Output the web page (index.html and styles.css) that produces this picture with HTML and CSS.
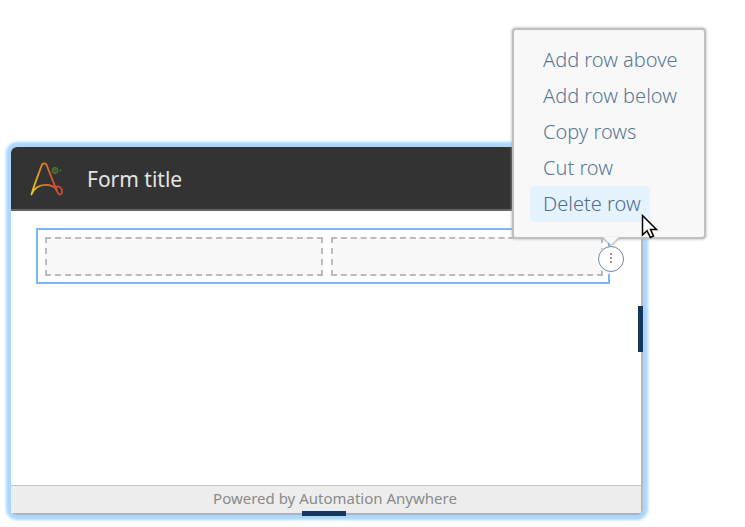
FILE: index.html
```html
<!DOCTYPE html>
<html lang="en">
<head>
    <meta charset="UTF-8">
    <title>Form builder</title>
    <link rel="stylesheet" href="styles.css">
</head>

<body>

    <main class="form-canvas">

        <header class="form-header">
            <svg class="logo" viewBox="0 0 36 36" aria-hidden="true">
                <defs>
                    <linearGradient id="stroke" x1="0" y1="0" x2="1" y2="0">
                        <stop offset="0" stop-color="#e8c81e"/>
                        <stop offset="0.35" stop-color="#d98427"/>
                        <stop offset="0.7" stop-color="#d9582b"/>
                        <stop offset="1" stop-color="#c9472a"/>
                    </linearGradient>
                </defs>
                <path d="M2.500 33.500C5 24 10 12 12.500 5C13.500 1.500 17 1.500 18 5L25.500 24C27 29 28.500 33.500 31 33.500C34.500 33 33.500 26.500 29.500 25.500C27 25 26.500 28 28 29C26 26 23 24.500 19 24C13 23.500 6 25 2.500 33.500Z" fill="none" stroke="url(#stroke)" stroke-width="1.800" stroke-linejoin="round"/>
                <circle cx="26" cy="9.500" r="3" fill="#3d5c2d" stroke="#4f7d34" stroke-width="1"/>
                <path d="M31.500 8v3" stroke="#426a30" stroke-width="1.200"/>
            </svg>
            <h1 class="form-title">Form title</h1>
        </header>

        <section class="form-body">
            <div class="form-row">
                <div class="cell"></div>
                <div class="cell"></div>

                <button class="more-button" type="button" aria-label="Row options">
                    <svg viewBox="0 0 24 24" aria-hidden="true">
                        <path d="M11 6h2v2h-2zM11 10h2v2h-2zM11 14h2v2h-2z" fill="#b58a80"/>
                    </svg>
                </button>

                <div class="row-menu">
                    <button class="menu-item" type="button">Add row above</button>
                    <button class="menu-item" type="button">Add row below</button>
                    <button class="menu-item" type="button">Copy rows</button>
                    <button class="menu-item" type="button">Cut row</button>
                    <button class="menu-item active" type="button">Delete row
                        <svg class="cursor" viewBox="0 0 18 26" aria-hidden="true">
                            <path d="M1.500 1.500V21L6 16.800L9.500 23.500L12.500 22L9.500 15.500H15.500Z" fill="#fff" stroke="#000" stroke-width="1.500"/>
                        </svg>
                    </button>
                </div>
            </div>
        </section>

        <footer class="form-footer">Powered by Automation Anywhere</footer>

        <span class="handle handle-right"></span>
        <span class="handle handle-bottom"></span>

    </main>

</body>
</html>
```

FILE: styles.css
```css
* {
    box-sizing: border-box;
}

body {
    margin: 0;
    padding: 147px 102px 12px 11px;
    background: #ffffff;
    font-family: "Noto Sans", "Open Sans", sans-serif;
}

.form-canvas {
    position: relative;
    display: flex;
    flex-direction: column;
    min-height: calc(100vh - 159px);
    background: #ffffff;
    border-right: 2px solid #b8b8b8;
    border-bottom: 2px solid #b0b3b8;
    border-radius: 6px;
    box-shadow: 0 0 3px 5px #a9d7ff;
}

.form-header {
    display: flex;
    align-items: center;
    gap: 22px;
    padding: 14px 18px 12px;
    background: #333333;
    border-bottom: 2px solid #666666;
    border-radius: 6px 0 0 0;
}

.logo {
    width: 36px;
    height: 36px;
}

.form-title {
    margin: 0;
    color: #e4e4e4;
    font-size: 21px;
    font-weight: 400;
    line-height: 36px;
}

.form-body {
    flex: 1;
    padding: 17px 31px 18px 25px;
}

.form-row {
    position: relative;
    display: grid;
    grid-template-columns: 278fr 272fr;
    gap: 8px;
    padding: 7px 5px 6px 7px;
    border: 2px solid #7db5fb;
}

.cell {
    height: 39px;
    background: #f8f8f8;
    border: 2px dashed #bbbbbb;
}

.more-button {
    position: absolute;
    right: -16px;
    bottom: 10px;
    width: 26px;
    height: 26px;
    padding: 0;
    background: #ffffff;
    border: 1px solid #6f8699;
    border-radius: 50%;
    box-shadow: 0 1px 0 1px #ffffff;
}

.more-button svg {
    display: block;
    width: 24px;
    height: 24px;
}

.row-menu {
    position: absolute;
    right: -98px;
    bottom: 43px;
    display: flex;
    flex-direction: column;
    align-items: flex-start;
    width: 194px;
    padding: 12px 16px 15px;
    background: #f8f8f8;
    border: 2px solid #c0c0c0;
    border-radius: 4px;
    box-shadow: 0 0 3px #aaaaaa;
}

/* pointer towards the options button */
.row-menu::after {
    content: "";
    position: absolute;
    top: 100%;
    left: 89px;
    border: 8px solid transparent;
    border-top-color: #f8f8f8;
    border-bottom: 0;
    filter: drop-shadow(0 1px 1px #999999);
}

.menu-item {
    position: relative;
    height: 36px;
    padding: 0 9px 0 13px;
    background: none;
    border: 0;
    border-radius: 4px;
    color: #5a7898;
    font-family: inherit;
    font-size: 20px;
    font-weight: 300;
    line-height: 36px;
    white-space: nowrap;
}

.menu-item.active {
    background: #e5f3ff;
    color: #4f6d8f;
}

.cursor {
    position: absolute;
    right: -9px;
    bottom: -18px;
    width: 18px;
    height: 26px;
}

.form-footer {
    height: 28px;
    padding-left: 18px;
    background: #ededed;
    border-top: 1px solid #c4c4c4;
    color: #8a8a8a;
    font-size: 15px;
    line-height: 24px;
    text-align: center;
}

.handle {
    position: absolute;
    background: #17365f;
}

.handle-right {
    top: 159px;
    right: -2px;
    width: 5px;
    height: 46px;
}

.handle-bottom {
    bottom: -3px;
    left: 291px;
    width: 44px;
    height: 5px;
}
```
